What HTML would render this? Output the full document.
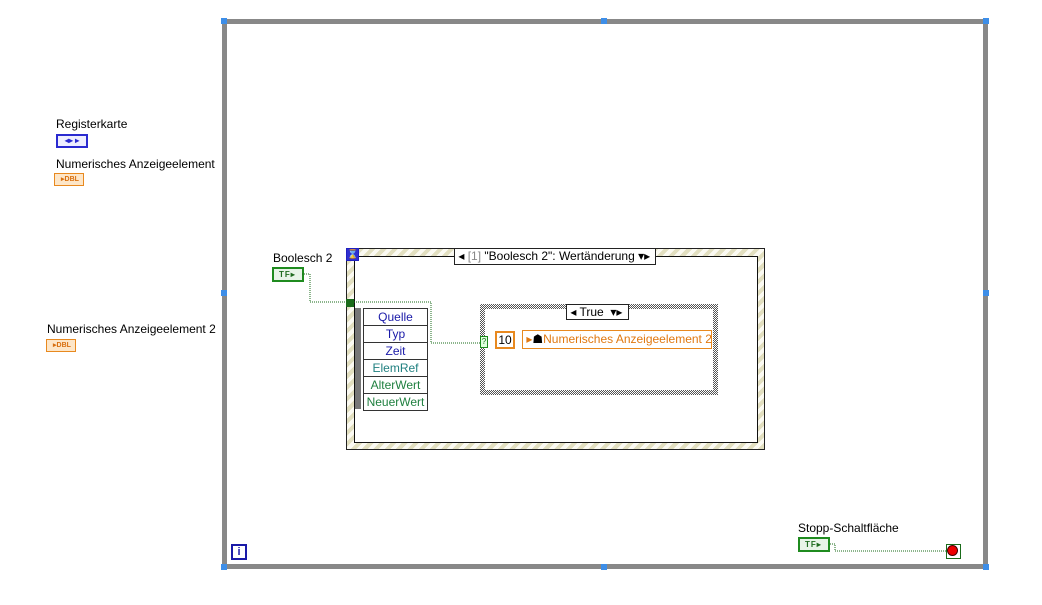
<!DOCTYPE html>
<html><head><meta charset="utf-8"><style>
body{margin:0;width:1042px;height:605px;background:#fff;position:relative;overflow:hidden;font-family:"Liberation Sans",sans-serif;font-size:12px;color:#000}
.a{position:absolute}
.h{position:absolute;width:6px;height:6px;background:#3d8ee8}
.hatch{background:repeating-linear-gradient(135deg,#e2dfc0 0 4px,#fbfaf2 4px 8px)}
.chk{background-color:#fff;background-image:repeating-conic-gradient(#555 0 25%,#fff 0 50%);background-size:2px 2px}
.tf{position:absolute;width:28px;height:11px;border:2px solid #1f8b1f;background:#e8f4e8;font:bold 8px "Liberation Sans",sans-serif;color:#1f6b1f;line-height:11px;text-indent:5px;letter-spacing:1px}
.dbl{position:absolute;width:28px;height:11px;border:1px solid #e8891f;background:#fde6c8;font:bold 7px "Liberation Sans",sans-serif;color:#d87010;line-height:11px;text-indent:6px}
.cell{position:absolute;left:363px;width:63px;height:16px;border:1px solid #333;background:#fff;text-align:center;line-height:16px;font-size:12px}
</style></head><body>
<div class="a" style="left:222px;top:19px;width:766px;height:5px;background:#888"></div>
<div class="a" style="left:222px;top:564px;width:766px;height:5px;background:#888"></div>
<div class="a" style="left:222px;top:19px;width:5px;height:550px;background:#888"></div>
<div class="a" style="left:983px;top:19px;width:5px;height:550px;background:#888"></div>
<div class="h" style="left:221px;top:18px"></div><div class="h" style="left:601px;top:18px"></div><div class="h" style="left:983px;top:18px"></div>
<div class="h" style="left:221px;top:290px"></div><div class="h" style="left:983px;top:290px"></div>
<div class="h" style="left:221px;top:564px"></div><div class="h" style="left:601px;top:564px"></div><div class="h" style="left:983px;top:564px"></div>
<div class="a" style="left:231px;top:544px;width:12px;height:12px;border:2px solid #1a1aa8;background:#fff;font:bold 11px 'Liberation Sans';color:#1a1aa8;text-align:center;line-height:12px">i</div>

<div class="a" style="left:56px;top:117px">Registerkarte</div>
<div class="a" style="left:56px;top:134px;width:28px;height:10px;border:2px solid #2a2ad0;background:#eef;font:bold 8px 'Liberation Sans';color:#2a2ad0;line-height:10px;text-align:center">◂▸ ▸</div>
<div class="a" style="left:56px;top:157px">Numerisches Anzeigeelement</div>
<div class="dbl" style="left:54px;top:173px">▸DBL</div>
<div class="a" style="left:47px;top:322px">Numerisches Anzeigeelement 2</div>
<div class="dbl" style="left:46px;top:339px">▸DBL</div>

<div class="a" style="left:273px;top:251px">Boolesch 2</div>
<div class="tf" style="left:272px;top:267px">TF▸</div>

<div class="a hatch" style="left:346px;top:248px;width:417px;height:200px;border:1px solid #222"></div>
<div class="a" style="left:354px;top:256px;width:402px;height:185px;background:#fff;border:1px solid #111"></div>
<div class="a" style="left:346px;top:248px;width:11px;height:11px;border:1px solid #2020c0;background:#3030d0;color:#fff;font-size:9px;text-align:center;line-height:11px">⌛</div>
<div class="a" style="left:454px;top:248px;width:200px;height:15px;border:1px solid #222;background:#fff;line-height:15px;font-size:12px;white-space:nowrap">&nbsp;◂ <span style="color:#888">[1]</span> "Boolesch 2": Wertänderung&nbsp;▾▸</div>
<div class="a" style="left:355px;top:308px;width:6px;height:101px;background:#777"></div>
<div class="a" style="left:346px;top:299px;width:8px;height:8px;background:#1a6b1a"></div>
<div class="cell" style="top:308px;color:#1a1aa8">Quelle</div>
<div class="cell" style="top:325px;color:#1a1aa8">Typ</div>
<div class="cell" style="top:342px;color:#1a1aa8">Zeit</div>
<div class="cell" style="top:359px;color:#208080">ElemRef</div>
<div class="cell" style="top:376px;color:#208040">AlterWert</div>
<div class="cell" style="top:393px;color:#208040">NeuerWert</div>

<svg class="a" style="left:0;top:0" width="1042" height="605">
<g stroke="#1a6b1a" stroke-width="1" stroke-dasharray="1,1" fill="none">
<path d="M302 274H310V302H346"/>
<path d="M354 302H431V343H481"/>
<path d="M830 544H835V551H946"/>
</g>
<path d="M514 339H522" stroke="#e8891f" stroke-width="1"/>
</svg>

<div class="a chk" style="left:480px;top:304px;width:238px;height:91px"></div>
<div class="a" style="left:485px;top:309px;width:228px;height:81px;background:#fff"></div>
<div class="a" style="left:566px;top:304px;width:61px;height:14px;border:1px solid #222;background:#fff;line-height:14px;white-space:nowrap">&nbsp;◂ True&nbsp; ▾▸</div>
<div class="a" style="left:480px;top:336px;width:6px;height:10px;border:1px solid #1a8a1a;background:#dfd;font-size:8px;color:#1a6b1a;line-height:10px;text-align:center">?</div>
<div class="a" style="left:495px;top:331px;width:16px;height:14px;border:2px solid #e8891f;background:#fff;line-height:14px;text-align:center">10</div>
<div class="a" style="left:522px;top:330px;width:188px;height:17px;border:1px solid #e8891f;background:#fff;color:#e07810;line-height:17px;white-space:nowrap;font-size:12px">&nbsp;▸<span style="color:#000">☗</span>Numerisches Anzeigeelement 2</div>

<div class="a" style="left:798px;top:521px">Stopp-Schaltfläche</div>
<div class="tf" style="left:798px;top:537px">TF▸</div>
<div class="a" style="left:946px;top:544px;width:13px;height:13px;border:1px solid #1a6b1a;background:#fff"></div>
<div class="a" style="left:948px;top:546px;width:9px;height:9px;border-radius:50%;background:#e00;box-shadow:0 0 0 1px #400"></div>
</body></html>
